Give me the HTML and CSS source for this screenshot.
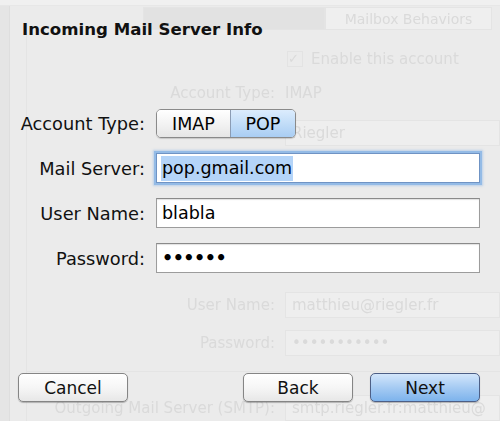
FILE: index.html
```html
<!DOCTYPE html>
<html>
<head>
<meta charset="utf-8">
<link rel="stylesheet" href="styles.css">
</head>
<body>
<div class="window">
  <div class="titlebar"></div>
  <div class="win-body">
    <div class="sidebar"></div>
    <div class="pane">
      <div class="tabs">
        <div class="tab tab-dark"></div>
        <div class="tab">Mailbox Behaviors</div>
      </div>
      <div class="box">
        <div class="bg-check"><span class="bg-box">✓</span>Enable this account</div>
        <div class="bg-row bg-type"><span class="bg-label">Account Type:</span><span class="bg-value">IMAP</span></div>
        <div class="bg-row bg-desc"><span class="bg-label"></span><span class="bg-field">Riegler</span></div>
        <div class="bg-row bg-user"><span class="bg-label">User Name:</span><span class="bg-field">matthieu@riegler.fr</span></div>
        <div class="bg-row bg-pass"><span class="bg-label">Password:</span><span class="bg-field">•••••••••••</span></div>
        <div class="bg-sep"></div>
        <div class="bg-row bg-smtp"><span class="bg-label">Outgoing Mail Server (SMTP):</span><span class="bg-field">smtp.riegler.fr:matthieu@</span></div>
      </div>
    </div>
  </div>
</div>

<div class="sheet">
  <h1 class="title">Incoming Mail Server Info</h1>
  <div class="form">
    <label class="label">Account Type:</label>
    <div class="field">
      <div class="segmented">
        <span class="seg">IMAP</span>
        <span class="seg seg-on">POP</span>
      </div>
    </div>
    <label class="label">Mail Server:</label>
    <div class="field"><div class="input input-focus"><span class="sel">pop.gmail.com</span></div></div>
    <label class="label">User Name:</label>
    <div class="field"><div class="input">blabla</div></div>
    <label class="label">Password:</label>
    <div class="field"><div class="input input-pass">••••••</div></div>
  </div>
  <div class="buttons">
    <button class="btn">Cancel</button>
    <span class="spacer"></span>
    <button class="btn">Back</button>
    <button class="btn btn-default">Next</button>
  </div>
</div>
</body>
</html>
```
FILE: styles.css
```css
html, body {
  margin: 0;
  padding: 0;
}
body {
  width: 500px;
  height: 421px;
  overflow: hidden;
  position: relative;
  background: #ebebeb;
  font-family: "DejaVu Sans", "Noto Sans", sans-serif;
}

/* ---------- faded background window ---------- */
.window {
  display: flex;
  flex-direction: column;
  height: 421px;
  color: #dadada;
  font-size: 15px;
  filter: blur(0.5px);
}
.titlebar {
  height: 12px;
  background: #f0f0f0;
  border-bottom: 1px solid #e7e7e7;
}
.win-body {
  flex: 1;
  display: flex;
}
.sidebar {
  width: 9px;
  background: #e5e5e5;
  border-right: 1px solid #dedede;
}
.pane {
  flex: 1;
  display: flex;
  flex-direction: column;
}
.tabs {
  display: flex;
  margin: 1px 0 0 133px;
  height: 23px;
}
.tab {
  width: 165px;
  border: 1px solid #e4e4e4;
  background: #efefef;
  text-align: center;
  line-height: 22px;
  font-size: 14px;
}
.tab-dark {
  width: 180px;
  background: #e2e2e2;
}
.box {
  flex: 1;
  margin-left: 16px;
  border-left: 1px solid #e4e4e4;
  display: flex;
  flex-direction: column;
}
.bg-check {
  margin: 21px 0 0 260px;
  display: flex;
  align-items: center;
  gap: 8px;
  height: 16px;
}
.bg-box {
  width: 14px;
  height: 14px;
  border: 1px solid #e3e3e3;
  font-size: 13px;
  line-height: 14px;
}
.bg-row {
  display: grid;
  grid-template-columns: 248px 1fr;
  column-gap: 10px;
  align-items: center;
}
.bg-label {
  text-align: right;
}
.bg-field {
  border: 1px solid #e4e4e4;
  background: #eeeeee;
  height: 24px;
  line-height: 24px;
  padding-left: 6px;
  white-space: nowrap;
  overflow: hidden;
}
.bg-type { margin-top: 16px; height: 20px; }
.bg-desc { margin-top: 17px; }
.bg-user { margin-top: 146px; }
.bg-pass { margin-top: 12px; }
.bg-sep {
  margin-top: 15px;
  border-top: 1px solid #e4e4e4;
}
.bg-smtp { margin-top: 23px; }

/* ---------- sheet ---------- */
.sheet {
  position: absolute;
  inset: 0;
  display: flex;
  flex-direction: column;
  color: #000;
}
.title {
  margin: 19px 0 0 22px;
  font-size: 16.6px;
  font-weight: bold;
  line-height: 22px;
  color: #111;
}
.form {
  margin-top: 68px;
  display: grid;
  grid-template-columns: 145px 324px;
  column-gap: 11px;
  row-gap: 15px;
  align-items: center;
}
.label {
  text-align: right;
  font-size: 17.8px;
  color: #111;
}
.segmented {
  display: inline-flex;
  height: 27px;
  border: 1px solid #8a8a8a;
  border-radius: 5px;
  overflow: hidden;
  box-shadow: 0 1px 1px rgba(0, 0, 0, 0.15);
}
.seg {
  display: flex;
  align-items: center;
  justify-content: center;
  width: 73px;
  font-size: 17.5px;
  background: linear-gradient(#ffffff, #f3f3f3 50%, #e6e6e6);
}
.seg-on {
  width: 64px;
  border-left: 1px solid #8b9cb4;
  background: linear-gradient(#dcecfd, #c2ddf8 50%, #a9cdf3);
}
.input {
  height: 28px;
  border: 1px solid #9c9c9c;
  border-top-color: #8a8a8a;
  background: #fff;
  font-size: 17.5px;
  line-height: 28px;
  padding-left: 5px;
  box-shadow: inset 0 1px 1px rgba(0, 0, 0, 0.12);
}
.input-focus {
  border-color: #6f93c4;
  box-shadow: 0 0 0 2px #94bbe6, 0 0 2px 3px rgba(140, 180, 230, 0.5);
  padding-left: 4px;
}
.sel {
  display: inline-block;
  background: #b4d4f8;
  line-height: 25px;
  padding: 0 1px;
}
.input-pass {
  font-weight: bold;
  letter-spacing: -0.5px;
}
.buttons {
  margin: auto 20px 19px 18px;
  display: flex;
  gap: 17px;
}
.spacer {
  flex: 1;
}
.btn {
  width: 110px;
  height: 29px;
  padding: 0;
  border: 1px solid #858585;
  border-radius: 5px;
  background: linear-gradient(#ffffff, #f6f6f6 50%, #e7e7e7);
  box-shadow: 0 1px 1px rgba(0, 0, 0, 0.25);
  font-family: "DejaVu Sans", "Noto Sans", sans-serif;
  font-size: 17px;
  color: #111;
}
.btn-default {
  border-color: #4d5f86;
  background: linear-gradient(#d3e6fb, #a6cbf3 50%, #7db3ec);
}
```
